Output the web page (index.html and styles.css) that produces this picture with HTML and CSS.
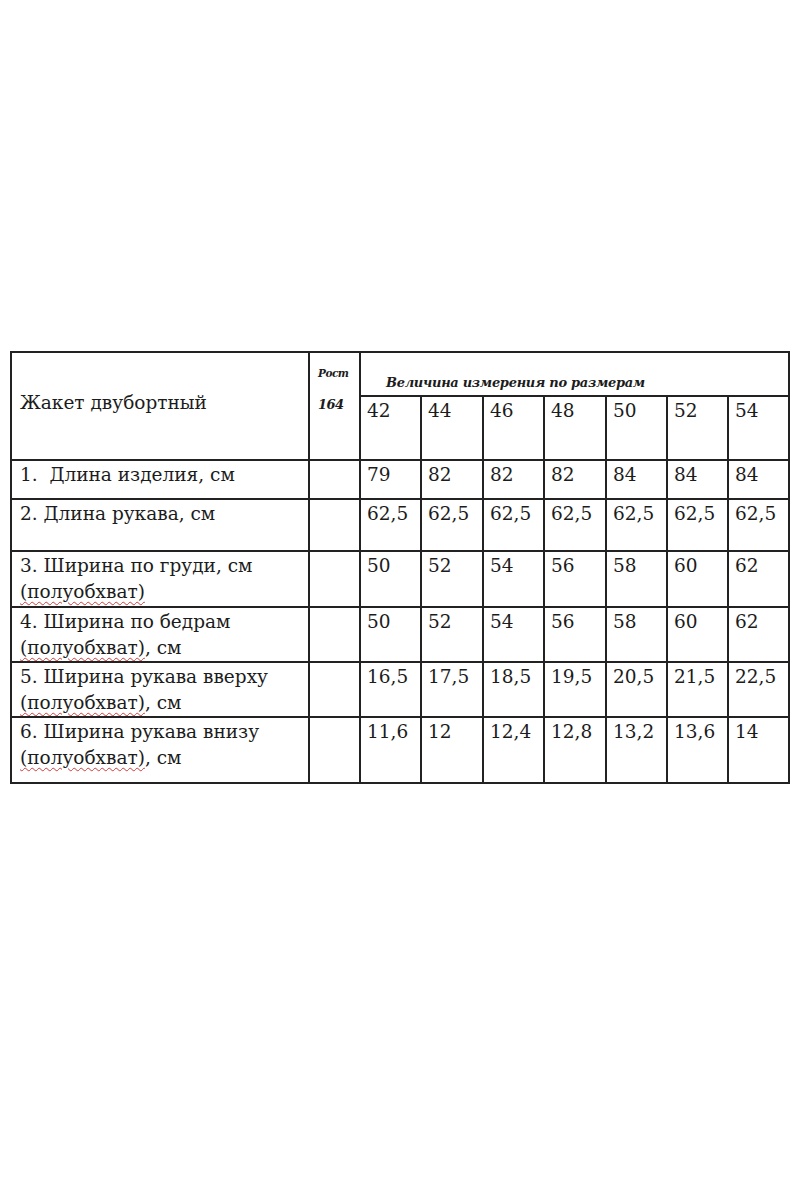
FILE: index.html
```html
<!DOCTYPE html>
<html lang="ru">
<head>
<meta charset="utf-8">
<title>Жакет двубортный</title>
<link rel="stylesheet" href="styles.css">
</head>
<body>
<div class="page">
<table class="sizes">
  <colgroup>
    <col class="c-name"><col class="c-rost">
    <col class="c-s"><col class="c-s2"><col class="c-s"><col class="c-s2"><col class="c-s"><col class="c-s"><col class="c-s">
  </colgroup>
  <tr class="h1">
    <td rowspan="2" class="title">Жакет двубортный</td>
    <td rowspan="2" class="rost"><div class="rost-l">Рост</div><div class="rost-v">164</div></td>
    <td colspan="7" class="span">Величина измерения по размерам</td>
  </tr>
  <tr class="h2">
    <td>42</td><td>44</td><td>46</td><td>48</td><td>50</td><td>52</td><td>54</td>
  </tr>
  <tr class="r1">
    <td class="name">1.&nbsp; Длина изделия, см</td><td></td>
    <td>79</td><td>82</td><td>82</td><td>82</td><td>84</td><td>84</td><td>84</td>
  </tr>
  <tr class="r2">
    <td class="name">2. Длина рукава, см</td><td></td>
    <td>62,5</td><td>62,5</td><td>62,5</td><td>62,5</td><td>62,5</td><td>62,5</td><td>62,5</td>
  </tr>
  <tr class="r3">
    <td class="name">3. Ширина по груди, см<br><span class="sp">(полуобхват)</span></td><td></td>
    <td>50</td><td>52</td><td>54</td><td>56</td><td>58</td><td>60</td><td>62</td>
  </tr>
  <tr class="r4">
    <td class="name">4. Ширина по бедрам<br><span class="sp">(полуобхват)</span>, см</td><td></td>
    <td>50</td><td>52</td><td>54</td><td>56</td><td>58</td><td>60</td><td>62</td>
  </tr>
  <tr class="r5">
    <td class="name">5. Ширина рукава вверху<br><span class="sp">(полуобхват)</span>, см</td><td></td>
    <td>16,5</td><td>17,5</td><td>18,5</td><td>19,5</td><td>20,5</td><td>21,5</td><td>22,5</td>
  </tr>
  <tr class="r6">
    <td class="name">6. Ширина рукава внизу<br><span class="sp">(полуобхват)</span>, см</td><td></td>
    <td>11,6</td><td>12</td><td>12,4</td><td>12,8</td><td>13,2</td><td>13,6</td><td>14</td>
  </tr>
</table>
</div>
</body>
</html>
```
FILE: styles.css
```css
html, body {
  margin: 0;
  padding: 0;
  background: #ffffff;
}
.page {
  padding: 351px 0 0 10px;
  font-family: "DejaVu Serif", "Liberation Serif", serif;
  color: #1c1c1c;
}
.sizes {
  border-collapse: collapse;
  table-layout: fixed;
  width: 780px;
  font-family: "DejaVu Serif", "Liberation Serif", serif;
  font-size: 18.5px;
  line-height: 26px;
}
.sizes td {
  border: 2px solid #222;
  padding: 1px 0 0 6px;
  vertical-align: top;
  white-space: nowrap;
  overflow: hidden;
}
.c-name { width: 298px; }
.c-rost { width: 51px; }
.c-s { width: 61px; }
.c-s2 { width: 62px; }

.sizes td.title {
  vertical-align: middle;
  padding: 0 0 6px 8px;
}
.sizes td.name { padding-left: 8px; }
.sizes td.rost {
  padding: 13px 0 0 8px;
  font-weight: bold;
  font-style: italic;
  letter-spacing: -0.5px;
}
.rost-l { font-size: 10.5px; line-height: 14px; }
.rost-v { font-size: 13px; line-height: 18px; margin-top: 16px; }
.sizes td.span {
  vertical-align: bottom;
  padding: 0 0 2px 25px;
  font-weight: bold;
  font-style: italic;
  font-size: 13px;
  line-height: 20px;
  letter-spacing: -0.3px;
}
.h1 { height: 44px; }
.h2 { height: 64px; }
.r1 { height: 39px; }
.r2 { height: 52px; }
.r3 { height: 56px; }
.r4 { height: 54px; }
.r5 { height: 55px; }
.r6 { height: 66px; }
.sp {
  text-decoration: underline wavy #d23a3a;
  text-decoration-thickness: 1px;
  text-underline-offset: 3px;
}
```
